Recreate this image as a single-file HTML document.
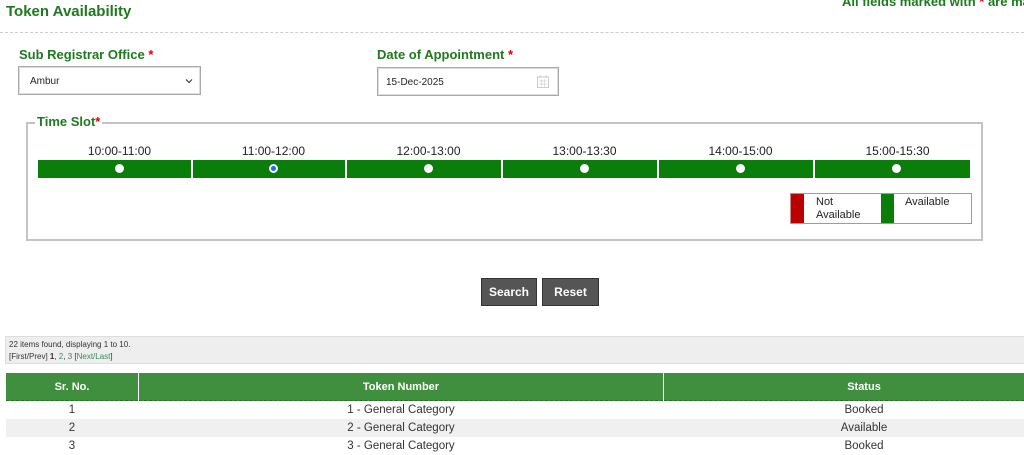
<!DOCTYPE html>
<html><head><meta charset="utf-8"><style>
*{box-sizing:border-box;margin:0;padding:0}
html{overflow:hidden}
body{width:1024px;height:455px;overflow:hidden;background:#fff;font-family:"Liberation Sans",Arial,sans-serif;position:relative;color:#222}
#w{position:absolute;left:0;top:0;width:1024px;height:455px;overflow:hidden}
.abs{position:absolute}
.g{color:#1f7a1f;font-weight:bold}
.r{color:#d00}
.box{border:1px solid #aaa;box-shadow:inset 0 0 0 1px #ddd;background:#fff;font-size:10px;color:#222}
.bar{position:absolute;top:160px;height:18px;background:#0a7d0a}
.dot{position:absolute;top:4px;left:50%;margin-left:0px;width:9px;height:9px;border-radius:50%;background:#fff}
.sl{position:absolute;top:144px;font-size:12px;color:#222;text-align:center;width:155px}
.btn{position:absolute;top:278px;height:28px;background:#555;border:1px solid #333;color:#fff;font-weight:bold;font-size:12px;text-align:center;line-height:26px}
table{border-collapse:collapse;font-size:11.5px}
td{text-align:center;height:18px;color:#333}
th{background:#3f8f3f;color:#fff;height:28px;font-size:11px;border:1px solid #fff;border-bottom:1px dashed #2a6a2a}
</style></head><body><div id="w">
<div class="abs g" style="left:6px;top:3px;font-size:15px">Token Availability</div>
<div class="abs g" style="left:842px;top:-6px;font-size:13px;white-space:nowrap">All fields marked with <span class="r">*</span> are mandatory</div>
<div class="abs" style="left:0;top:32px;width:1024px;border-top:1px dashed #ccc"></div>
<div class="abs g" style="left:19px;top:47px;font-size:13px">Sub Registrar Office <span class="r">*</span></div>
<div class="abs g" style="left:377px;top:47px;font-size:13px">Date of Appointment <span class="r">*</span></div>
<div class="abs box" style="left:18px;top:66px;width:183px;height:29px;padding:9px 0 0 11px">Ambur<svg style="position:absolute;right:7px;top:11px" width="8" height="6" viewBox="0 0 8 6"><path d="M1 1.5l3 3 3-3" fill="none" stroke="#333" stroke-width="1.1"/></svg></div>
<div class="abs box" style="left:377px;top:67px;width:182px;height:29px;padding:9px 0 0 8px">15-Dec-2025
<svg style="position:absolute;right:9px;top:7px" width="12" height="13" viewBox="0 0 12 13"><rect x="0.5" y="2" width="11" height="10.5" fill="none" stroke="#ccc"/><line x1="3" y1="0" x2="3" y2="3" stroke="#ccc"/><line x1="9" y1="0" x2="9" y2="3" stroke="#ccc"/><path d="M2 6h8M2 9h8M4.5 4.5v7M7.5 4.5v7" stroke="#ddd"/></svg></div>
<div class="abs" style="left:26px;top:122px;width:957px;height:119px;border:2px solid #c4c4c4"></div>
<div class="abs g" style="left:35px;top:114px;font-size:13px;background:#fff;padding:0 2px">Time Slot<span class="r">*</span></div>
<div class="sl" style="left:42px">10:00-11:00</div>
<div class="sl" style="left:196px">11:00-12:00</div>
<div class="sl" style="left:351px">12:00-13:00</div>
<div class="sl" style="left:507px">13:00-13:30</div>
<div class="sl" style="left:663px">14:00-15:00</div>
<div class="sl" style="left:820px">15:00-15:30</div>
<div class="bar" style="left:38px;width:153px"><div class="dot"></div></div>
<div class="bar" style="left:193px;width:152px"><div class="dot" style="background:#1a6cf0;border:2px solid #fff"></div></div>
<div class="bar" style="left:347px;width:154px"><div class="dot"></div></div>
<div class="bar" style="left:503px;width:154px"><div class="dot"></div></div>
<div class="bar" style="left:659px;width:154px"><div class="dot"></div></div>
<div class="bar" style="left:815px;width:155px"><div class="dot" style="margin-left:-1px"></div></div>
<div class="abs" style="left:790px;top:193px;width:182px;height:31px;border:1px solid #c88;font-size:11px">
<div class="abs" style="left:0;top:0;width:13px;height:29px;background:#b00"></div>
<div class="abs" style="left:25px;top:2px;line-height:13px">Not<br>Available</div>
<div class="abs" style="left:90px;top:0;width:13px;height:29px;background:#0a7d0a"></div>
<div class="abs" style="left:114px;top:2px">Available</div></div>
<div class="btn" style="left:481px;width:56px">Search</div>
<div class="btn" style="left:542px;width:57px">Reset</div>
<div class="abs" style="left:5px;top:336px;width:1019px;height:28px;background:#eee;border:1px solid #ddd;border-right:0;font-size:8px;color:#333;padding:2px 0 0 3px;line-height:12px">22 items found, displaying 1 to 10.<br>[First/Prev] <b>1</b>, <span style="color:#3a8a5a">2</span>, <span style="color:#3a8a5a">3</span> [<span style="color:#3a8a5a">Next/Last</span>]</div>
<div class="abs" style="left:5px;top:372px;width:1019px;overflow:hidden">
<table style="width:1060px">
<tr><th style="width:133px">Sr. No.</th><th style="width:525px">Token Number</th><th>Status</th></tr>
<tr><td>1</td><td>1 - General Category</td><td>Booked</td></tr>
<tr style="background:#f0f0f0"><td>2</td><td>2 - General Category</td><td>Available</td></tr>
<tr><td>3</td><td>3 - General Category</td><td>Booked</td></tr>
</table></div>
</div></body></html>
